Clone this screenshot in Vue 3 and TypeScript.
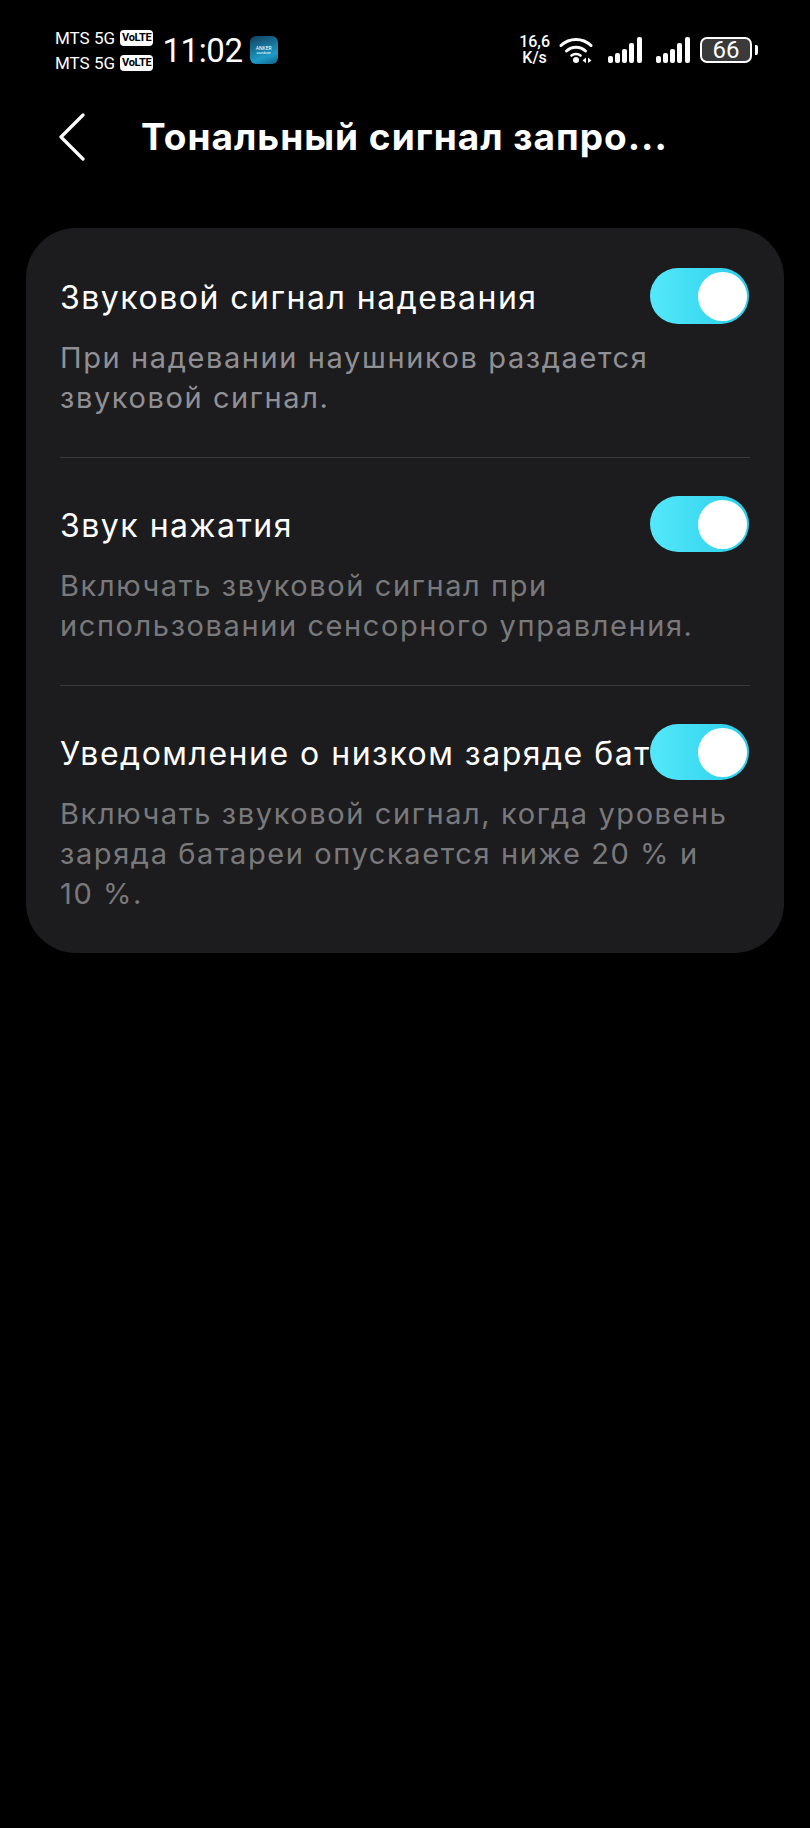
<template>
  <div class="screen">
    <div class="status-bar">
      <div class="carriers">
        <div v-for="n in 2" :key="n" class="carrier">
          <span>MTS 5G</span>
          <span class="volte">VoLTE</span>
        </div>
      </div>
      <span class="clock">11:02</span>
      <div class="app-tile">
        <span>ANKER</span>
        <span class="app-tile-sub">soundcore</span>
      </div>
      <div class="status-right">
        <div class="speed"><span>16,6</span><span>K/s</span></div>
        <svg class="wifi" width="36" height="28" viewBox="0 0 36 28" fill="none" stroke="#fff" stroke-linecap="round">
          <path d="M2 9.500C10.500 1.500 23.500 1.500 32 9.500" stroke-width="3" />
          <path d="M7.500 15C13 10 21 10 26.500 15" stroke-width="3" />
          <path d="M12.500 19.500C15 17.500 19 17.500 21.500 19.500" stroke-width="2.600" />
          <circle cx="17" cy="24" r="3" fill="#fff" stroke="none" />
          <path d="M27 21.500L23.500 24.500L27 27ZM29 21.500L32.500 24.500L29 27Z" fill="#fff" stroke="none" />
        </svg>
        <svg v-for="n in 2" :key="n" class="signal" width="34" height="28" viewBox="0 0 34 28" fill="#fff">
          <rect x="0" y="20" width="5" height="7" rx="2" />
          <rect x="7" y="17" width="5" height="10" rx="2" />
          <rect x="14" y="13" width="5" height="14" rx="2" />
          <rect x="21" y="7" width="5" height="20" rx="2" />
          <rect x="29" y="1" width="5" height="26" rx="2" />
        </svg>
        <div class="battery">
          <div class="battery-body">66</div>
          <span class="battery-cap" />
        </div>
      </div>
    </div>

    <div class="app-bar">
      <svg class="back" width="28" height="48" viewBox="0 0 28 48" fill="none" stroke="#fff" stroke-width="3.200" stroke-linecap="round" stroke-linejoin="round">
        <path d="M25 2L3 24L25 46" />
      </svg>
      <h1 class="title">{{ title }}</h1>
    </div>

    <section class="card">
      <div v-for="(item, i) in items" :key="item.name" class="item" :class="{ divided: i > 0 }">
        <div class="item-head">
          <span class="item-name">{{ item.name }}</span>
          <span class="switch"><span class="knob" /></span>
        </div>
        <p class="item-desc" :class="{ dim: i > 0 }">{{ item.desc }}</p>
      </div>
    </section>
  </div>
</template>

<script setup lang="ts">
interface SoundItem {
  name: string
  desc: string
}

const title = 'Тональный сигнал запро...'

const items: SoundItem[] = [
  {
    name: 'Звуковой сигнал надевания',
    desc: 'При надевании наушников раздается звуковой сигнал.',
  },
  {
    name: 'Звук нажатия',
    desc: 'Включать звуковой сигнал при использовании сенсорного управления.',
  },
  {
    name: 'Уведомление о низком заряде батареи',
    // nbsp keeps "10 %" together on the last line
    desc: 'Включать звуковой сигнал, когда уровень заряда батареи опускается ниже 20 % и 10\u00a0%.',
  },
]
</script>

<style>
html,
body {
  margin: 0;
  background: #000;
}
</style>

<style scoped>
.screen {
  width: 810px;
  height: 1828px;
  background: #000;
  color: #fff;
  font-family: Inter, "Noto Sans", sans-serif;
  overflow: hidden;
}

.status-bar {
  display: flex;
  align-items: center;
  height: 76px;
  padding: 24px 52px 0 55px;
  box-sizing: border-box;
}

.carriers {
  display: flex;
  flex-direction: column;
  gap: 3px;
  font-family: Roboto, sans-serif;
  font-size: 17px;
  line-height: 22px;
}

.carrier {
  display: flex;
  align-items: center;
  gap: 5px;
}

.volte {
  background: #fff;
  color: #000;
  border-radius: 4px;
  font-size: 11px;
  font-weight: 700;
  line-height: 16px;
  padding: 0 2px;
  letter-spacing: -0.3px;
}

.clock {
  margin-left: 9px;
  font-family: Roboto, sans-serif;
  font-size: 33px;
  letter-spacing: -0.4px;
  line-height: 40px;
  padding-top: 2px;
}

.app-tile {
  display: flex;
  flex-direction: column;
  align-items: center;
  justify-content: center;
  width: 28px;
  height: 28px;
  margin-left: 7px;
  border-radius: 6px;
  background: linear-gradient(160deg, #123e5c, #1d9cc8 70%, #0f5f86);
  font-family: Roboto, sans-serif;
  font-size: 5px;
  line-height: 6px;
}

.app-tile-sub {
  font-size: 3px;
  line-height: 4px;
}

.status-right {
  display: flex;
  align-items: center;
  margin-left: auto;
}

.speed {
  display: flex;
  flex-direction: column;
  align-items: center;
  font-family: Roboto, sans-serif;
  font-size: 16px;
  font-weight: 500;
  line-height: 16px;
  margin-right: 9px;
}

.wifi {
  margin-right: 13px;
}

.signal {
  margin-right: 14px;
}

.battery {
  display: flex;
  align-items: center;
  gap: 3px;
  margin-left: -4px;
}

.battery-body {
  width: 52px;
  height: 26px;
  box-sizing: border-box;
  border: 2px solid #fff;
  border-radius: 7px;
  background: #3a3a3a;
  font-family: Roboto, sans-serif;
  font-size: 24px;
  line-height: 22px;
  text-align: center;
}

.battery-cap {
  width: 3px;
  height: 10px;
  background: #fff;
  border-radius: 0 2px 2px 0;
}

.app-bar {
  display: flex;
  align-items: center;
  height: 70px;
  margin-top: 26px;
  padding-left: 58px;
}

.title {
  margin: 0 0 0 55px;
  font-size: 37px;
  font-weight: 700;
  letter-spacing: 1px;
  line-height: 48px;
  white-space: nowrap;
}

.card {
  margin: 56px 26px 0;
  padding: 0 34px 39px;
  background: #1c1c1e;
  border-radius: 50px;
}

.item {
  padding-top: 40px;
}

.item.divided {
  margin-top: 39px;
  padding-top: 38px;
  border-top: 1px solid #38383a;
}

.item-head {
  display: flex;
  align-items: center;
  justify-content: space-between;
  height: 56px;
}

.item-name {
  flex: 1;
  min-width: 0;
  padding-top: 4px;
  overflow: hidden;
  white-space: nowrap;
  font-size: 32px;
  letter-spacing: 1.5px;
  line-height: 40px;
}

.switch {
  display: flex;
  align-items: center;
  justify-content: flex-end;
  flex-shrink: 0;
  width: 99px;
  height: 56px;
  margin-right: 1px;
  padding-right: 2px;
  box-sizing: border-box;
  border-radius: 28px;
  background: linear-gradient(90deg, #55e8fb, #28cfe9);
}

.knob {
  width: 49px;
  height: 49px;
  border-radius: 50%;
  background: #fff;
}

.item-desc {
  margin: 14px 0 0;
  color: #909094;
  font-size: 29px;
  letter-spacing: 1.6px;
  line-height: 40px;
}

.item-desc.dim {
  color: #79797b;
}
</style>
